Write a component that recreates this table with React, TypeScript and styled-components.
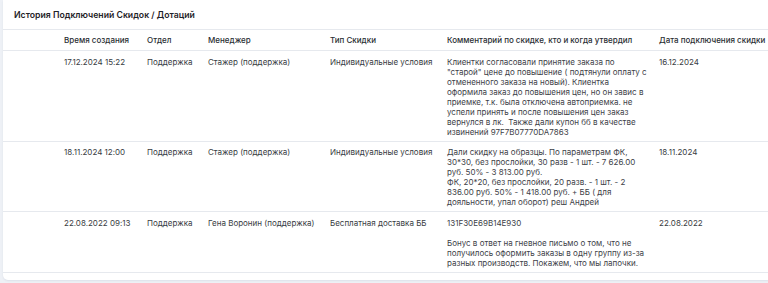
import styled, { createGlobalStyle } from 'styled-components'

type Row = {
    created: string
    dept: string
    manager: string
    type: string
    comment: string
    date: string
}

const rows: Row[] = [
    {
        created: '17.12.2024 15:22',
        dept: 'Поддержка',
        manager: 'Стажер (поддержка)',
        type: 'Индивидуальные условия',
        comment:
            'Клиентки согласовали принятие заказа по "старой" цене до повышение ( подтянули оплату с отмененного заказа на новый). Клиентка оформила заказ до повышения цен, но он завис в приемке, т.к. была отключена автоприемка. не успели принять и после повышения цен заказ вернулся в лк.  Также дали купон бб в качестве извинений 97F7B07770DA7863',
        date: '16.12.2024',
    },
    {
        created: '18.11.2024 12:00',
        dept: 'Поддержка',
        manager: 'Стажер (поддержка)',
        type: 'Индивидуальные условия',
        comment:
            'Дали скидку на образцы. По параметрам ФК, 30*30, без прослойки, 30 разв - 1 шт. - 7 626.00 руб. 50% - 3 813.00 руб.\nФК, 20*20, без прослойки, 20 разв. - 1 шт. - 2 836.00 руб. 50% - 1 418.00 руб. + ББ ( для дояльности, упал оборот) реш Андрей',
        date: '18.11.2024',
    },
    {
        created: '22.08.2022 09:13',
        dept: 'Поддержка',
        manager: 'Гена Воронин (поддержка)',
        type: 'Бесплатная доставка ББ',
        comment:
            '131F30E69B14E930\n\nБонус в ответ на гневное письмо о том, что не получилось оформить заказы в одну группу из-за разных производств. Покажем, что мы лапочки.',
        date: '22.08.2022',
    },
]

const headers = ['', 'Время создания', 'Отдел', 'Менеджер', 'Тип Скидки', 'Комментарий по скидке, кто и когда утвердил', 'Дата подключения скидки']

const DiscountHistory = () => {
    return (
        <Page>
            <GlobalStyle />
            <Card>
                <Title>История Подключений Скидок / Дотаций</Title>
                <HeadRow>
                    {headers.map((h, i) => (
                        <HeadCell key={i}>{h}</HeadCell>
                    ))}
                </HeadRow>
                {rows.map((r, i) => (
                    <BodyRow key={i}>
                        <Cell />
                        <Cell>{r.created}</Cell>
                        <Cell>{r.dept}</Cell>
                        <Cell>{r.manager}</Cell>
                        <Cell>{r.type}</Cell>
                        <Comment>{r.comment}</Comment>
                        <Cell>{r.date}</Cell>
                    </BodyRow>
                ))}
            </Card>
        </Page>
    )
}

const GlobalStyle = createGlobalStyle`
    html, body {
        margin: 0;
        padding: 0;
        background: #eef1f6;
        overflow: hidden;
    }
    body {
        font-family: Inter, "Liberation Sans", sans-serif;
        font-feature-settings: "calt" 0;
    }
`

const Page = styled.div`
    width: 768px;
    height: 283px;
    padding-left: 3px;
    box-sizing: border-box;
    overflow: hidden;
`

const Card = styled.div`
    width: 800px;
    background: #ffffff;
    border-radius: 0 0 5px 5px;
    padding-bottom: 7px;
    box-shadow: 0 1px 2px rgba(30, 50, 90, 0.08);
`

const Title = styled.div`
    height: 29px;
    display: flex;
    align-items: center;
    padding-left: 11px;
    font-size: 8.7px;
    font-weight: 600;
    color: #1f2328;
    border-bottom: 1px solid #e6e9ee;
`

const columns = '61px 83px 61px 122px 117px 212px 144px'

const HeadRow = styled.div`
    display: grid;
    grid-template-columns: ${columns};
    height: 20px;
    align-items: center;
    border-bottom: 1px solid #e6e9ee;
`

const HeadCell = styled.div`
    font-size: 8px;
    font-weight: 500;
    color: #2a2e33;
    white-space: nowrap;
`

const BodyRow = styled.div`
    display: grid;
    grid-template-columns: ${columns};
    padding: 5.5px 0 4px;
    border-bottom: 1px solid #e6e9ee;
`

const Cell = styled.div`
    font-size: 8px;
    line-height: 10px;
    color: #383c42;
    white-space: nowrap;
`

const Comment = styled(Cell)`
    white-space: pre-wrap;
    padding-right: 10px;
    color: #3d4147;
`

export default DiscountHistory
